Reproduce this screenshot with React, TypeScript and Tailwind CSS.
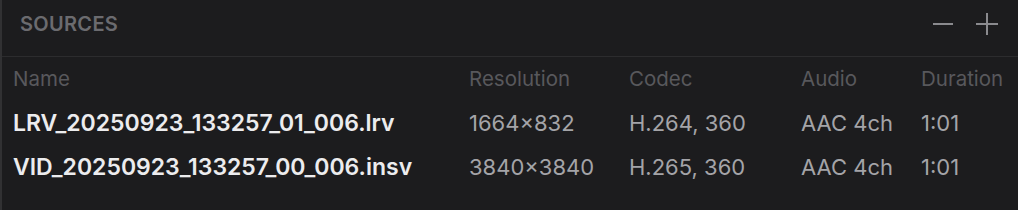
import React from 'react';

interface SourceFile {
  name: string;
  resolution: string;
  codec: string;
  audio: string;
  duration: string;
}

const sources: SourceFile[] = [
  { name: 'LRV_20250923_133257_01_006.lrv', resolution: '1664×832', codec: 'H.264, 360', audio: 'AAC 4ch', duration: '1:01' },
  { name: 'VID_20250923_133257_00_006.insv', resolution: '3840×3840', codec: 'H.265, 360', audio: 'AAC 4ch', duration: '1:01' },
];

const cols = 'grid grid-cols-[456px_160px_172px_120px_1fr] items-center';

const MinusIcon = () => (
  <svg width="22" height="22" viewBox="0 0 22 22" aria-hidden="true">
    <line x1="1" y1="11" x2="21" y2="11" stroke="#8a8a8e" strokeWidth="2" />
  </svg>
);

const PlusIcon = () => (
  <svg width="22" height="22" viewBox="0 0 22 22" aria-hidden="true">
    <line x1="0" y1="11" x2="22" y2="11" stroke="#8a8a8e" strokeWidth="2" />
    <line x1="11" y1="0" x2="11" y2="22" stroke="#8a8a8e" strokeWidth="2" />
  </svg>
);

export default function App() {
  return (
    <div
      className="w-[1018px] h-[210px] bg-[#1c1c1e] border-l-2 border-[#313133] overflow-hidden"
      style={{ fontFamily: 'Inter, "Noto Sans", sans-serif' }}
    >
      {/* panel header */}
      <div className="h-[57px] flex items-center justify-between pl-[18px] pr-[20px] border-b border-[#2c2c2e]">
        <span className="text-[20px] font-semibold tracking-[0.3px] text-[#6b6b6f] -mt-[9px]">SOURCES</span>
        <div className="flex items-center gap-[22px] -mt-[9px]">
          <button className="text-[#8a8a8e]"><MinusIcon /></button>
          <button className="text-[#8a8a8e]"><PlusIcon /></button>
        </div>
      </div>

      {/* column headers */}
      <div className={`${cols} h-[44px] pl-[11px] text-[20.5px] text-[#58585c]`}>
        <span>Name</span>
        <span>Resolution</span>
        <span>Codec</span>
        <span>Audio</span>
        <span>Duration</span>
      </div>

      {/* rows */}
      {sources.map((s) => (
        <div key={s.name} className={`${cols} h-[44px] pl-[11px] text-[22px] text-[#a4a4a8]`}>
          <span className="text-[23px] font-semibold text-[#ececee]">{s.name}</span>
          <span>{s.resolution}</span>
          <span>{s.codec}</span>
          <span>{s.audio}</span>
          <span>{s.duration}</span>
        </div>
      ))}
    </div>
  );
}
